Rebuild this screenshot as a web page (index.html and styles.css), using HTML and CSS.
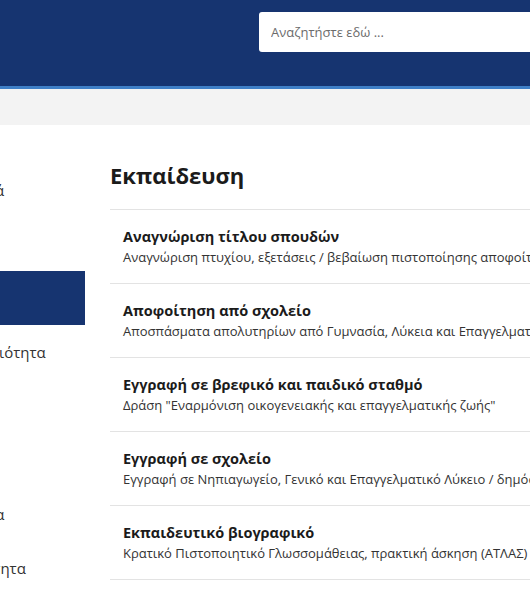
FILE: index.html
```html
<!DOCTYPE html>
<html lang="el">
<head>
    <meta charset="UTF-8">
    <meta name="viewport" content="width=device-width, initial-scale=1.0">
    <title>Εκπαίδευση</title>
    <link rel="stylesheet" href="styles.css">
</head>
<body>
    <header class="site-header">
        <div class="header-inner">
            <input class="search" type="text" placeholder="Αναζητήστε εδώ ...">
        </div>
    </header>
    <div class="breadcrumbs"></div>

    <div class="layout">
        <nav class="sidebar">
            <a class="side-link" href="#">Βεβαιώσεις και δικαστικά</a>
            <a class="side-link" href="#">Δικαιοσύνη</a>
            <a class="side-link active" href="#">Εκπαίδευση</a>
            <a class="side-link" href="#">Επιχειρηματική δραστηριότητα</a>
            <a class="side-link" href="#">Εργασία και ασφάλιση</a>
            <a class="side-link" href="#">Οικογένεια</a>
            <a class="side-link" href="#">Περιουσία και φορολογία</a>
            <a class="side-link" href="#">Πολίτης και καθημερινότητα</a>
        </nav>

        <main class="content">
            <h1 class="page-title">Εκπαίδευση</h1>
            <ul class="service-list">
                <li class="service">
                    <a class="service-title" href="#">Αναγνώριση τίτλου σπουδών</a>
                    <p class="service-desc">Αναγνώριση πτυχίου, εξετάσεις / βεβαίωση πιστοποίησης αποφοίτησης</p>
                </li>
                <li class="service">
                    <a class="service-title" href="#">Αποφοίτηση από σχολείο</a>
                    <p class="service-desc">Αποσπάσματα απολυτηρίων από Γυμνασία, Λύκεια και Επαγγελματικά Λύκεια</p>
                </li>
                <li class="service">
                    <a class="service-title" href="#">Εγγραφή σε βρεφικό και παιδικό σταθμό</a>
                    <p class="service-desc">Δράση "Εναρμόνιση οικογενειακής και επαγγελματικής ζωής"</p>
                </li>
                <li class="service">
                    <a class="service-title" href="#">Εγγραφή σε σχολείο</a>
                    <p class="service-desc">Εγγραφή σε Νηπιαγωγείο, Γενικό και Επαγγελματικό Λύκειο / δημόσια σχολεία</p>
                </li>
                <li class="service">
                    <a class="service-title" href="#">Εκπαιδευτικό βιογραφικό</a>
                    <p class="service-desc">Κρατικό Πιστοποιητικό Γλωσσομάθειας, πρακτική άσκηση (ΑΤΛΑΣ)</p>
                </li>
                <li class="service">
                    <a class="service-title" href="#">Πανελλαδικές εξετάσεις</a>
                    <p class="service-desc">Μηχανογραφικό δελτίο, αποτελέσματα</p>
                </li>
            </ul>
        </main>
    </div>
</body>
</html>
```

FILE: styles.css
```css
body {
    margin: 0;
    font-family: 'Open Sans', 'Noto Sans', sans-serif;
    color: #1b1b1b;
    background-color: #ffffff;
    overflow: hidden;
}

.site-header {
    background-color: #163470;
    border-bottom: 3px solid #3f7fc6;
    height: 86px;
}

.header-inner {
    padding: 12px 0 0 259px;
}

.search {
    display: block;
    width: 400px;
    height: 40px;
    box-sizing: border-box;
    padding: 0 12px;
    border: none;
    border-radius: 3px;
    font-family: inherit;
    font-size: 13px;
    color: #333;
    background-color: #ffffff;
}

.search::placeholder {
    color: #6b6b6b;
}

.breadcrumbs {
    background-color: #f3f3f3;
    height: 36px;
}

/* page is wider than the window, sidebar is mostly off to the left */
.layout {
    display: flex;
    margin-left: -215px;
}

.sidebar {
    flex: 0 0 300px;
    display: flex;
    flex-direction: column;
    padding-top: 38px;
}

.side-link {
    display: flex;
    align-items: center;
    height: 54px;
    padding-left: 39px;
    font-size: 15px;
    color: #333;
    text-decoration: none;
    white-space: nowrap;
}

.side-link.active {
    background-color: #163470;
    color: #ffffff;
}

.content {
    flex: 1 0 auto;
    margin-left: 25px;
    padding-top: 34px;
}

.page-title {
    margin: 0 0 18px;
    font-size: 22px;
    line-height: 32px;
    font-weight: 700;
    color: #1b1b1b;
}

.service-list {
    list-style: none;
    margin: 0;
    padding: 0;
}

.service {
    border-top: 1px solid #e3e3e3;
    padding: 17px 13px 16px;
    white-space: nowrap;
}

.service-title {
    display: block;
    font-size: 14.5px;
    line-height: 20px;
    font-weight: 700;
    color: #1b1b1b;
    text-decoration: none;
}

.service-desc {
    margin: 0;
    font-size: 13px;
    line-height: 20px;
    color: #333;
}
```
